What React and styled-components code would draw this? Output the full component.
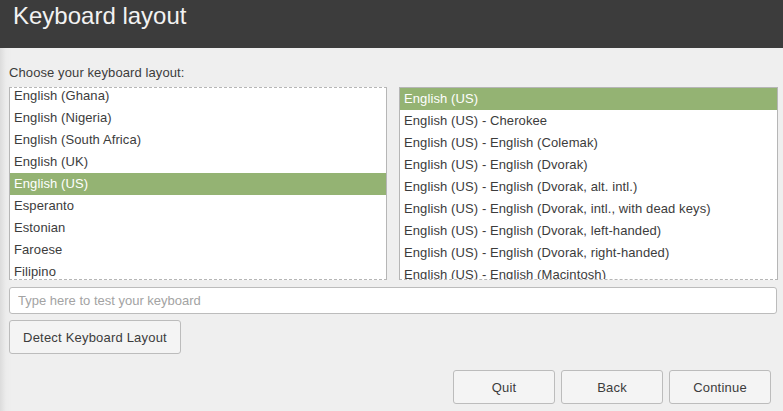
import React, { useState } from "react";
import styled, { createGlobalStyle } from "styled-components";

const layouts = [
  "English (Ghana)",
  "English (Nigeria)",
  "English (South Africa)",
  "English (UK)",
  "English (US)",
  "Esperanto",
  "Estonian",
  "Faroese",
  "Filipino",
];

const variants = [
  "English (US)",
  "English (US) - Cherokee",
  "English (US) - English (Colemak)",
  "English (US) - English (Dvorak)",
  "English (US) - English (Dvorak, alt. intl.)",
  "English (US) - English (Dvorak, intl., with dead keys)",
  "English (US) - English (Dvorak, left-handed)",
  "English (US) - English (Dvorak, right-handed)",
  "English (US) - English (Macintosh)",
];

function App() {
  const [layout, setLayout] = useState("English (US)");
  const [variant, setVariant] = useState("English (US)");

  return (
    <>
      <GlobalStyle />
      <Window>
        <Header>
          <Title>Keyboard layout</Title>
        </Header>
        <Body>
          <Label>Choose your keyboard layout:</Label>
          <Lists>
            <ListBox>
              <ListInner $offset={-3}>
                {layouts.map((name) => (
                  <Row
                    key={name}
                    $selected={name === layout}
                    onClick={() => setLayout(name)}
                  >
                    {name}
                  </Row>
                ))}
              </ListInner>
            </ListBox>
            <ListBox $solidTop>
              <ListInner $offset={0}>
                {variants.map((name) => (
                  <Row
                    key={name}
                    $selected={name === variant}
                    onClick={() => setVariant(name)}
                  >
                    {name}
                  </Row>
                ))}
              </ListInner>
            </ListBox>
          </Lists>
          <TestInput placeholder="Type here to test your keyboard" />
          <DetectRow>
            <Button $width={172}>Detect Keyboard Layout</Button>
          </DetectRow>
          <Footer>
            <Button $width={102}>Quit</Button>
            <Button $width={102}>Back</Button>
            <Button $width={102}>Continue</Button>
          </Footer>
        </Body>
      </Window>
    </>
  );
}

const GlobalStyle = createGlobalStyle`
  html, body {
    margin: 0;
    padding: 0;
    background: #efefef;
  }
  body {
    font-family: "Liberation Sans", "DejaVu Sans", sans-serif;
    font-size: 13px;
    color: #3c3c3c;
  }
`;

const Window = styled.div`
  width: 783px;
  height: 411px;
  display: flex;
  flex-direction: column;
  overflow: hidden;
`;

const Header = styled.div`
  height: 48px;
  background: #3c3c3c;
  display: flex;
  align-items: flex-start;
  padding: 0 13px;
  flex-shrink: 0;
`;

const Title = styled.h1`
  margin: 0;
  padding-top: 2px;
  font-weight: normal;
  font-size: 24px;
  line-height: 28px;
  color: #f2f2f2;
`;

const Body = styled.div`
  flex: 1;
  display: flex;
  flex-direction: column;
  padding: 17px 6px 0 9px;
  background: linear-gradient(to right, #dcdcdc 0px, #ececec 6px, #efefef 12px);
`;

const Label = styled.div`
  font-size: 13px;
  line-height: 16px;
  color: #3c3c3c;
  letter-spacing: 0.1px;
`;

const Lists = styled.div`
  display: grid;
  grid-template-columns: 378px 379px;
  gap: 12px;
  margin-top: 6px;
  height: 193px;
`;

const ListBox = styled.div`
  background: #ffffff;
  border: 1px solid #b6b6b6;
  border-top: 1px ${(p) => (p.$solidTop ? "solid" : "dashed")} #b6b6b6;
  border-bottom: 1px dashed #b6b6b6;
  overflow: hidden;
`;

const ListInner = styled.div`
  margin-top: ${(p) => p.$offset}px;
  display: flex;
  flex-direction: column;
`;

const Row = styled.div`
  height: 22px;
  line-height: 22px;
  padding: 0 4px;
  white-space: nowrap;
  cursor: default;
  letter-spacing: 0.1px;
  background: ${(p) => (p.$selected ? "#94b373" : "transparent")};
  color: ${(p) => (p.$selected ? "#ffffff" : "#3c3c3c")};
`;

const TestInput = styled.input`
  margin-top: 7px;
  height: 27px;
  box-sizing: border-box;
  width: 768px;
  border: 1px solid #bcbcbc;
  border-radius: 3px;
  background: #ffffff;
  padding: 0 8px;
  font-family: inherit;
  font-size: 13px;
  color: #3c3c3c;
  outline: none;
  &::placeholder {
    color: #a3a3a3;
  }
`;

const DetectRow = styled.div`
  display: flex;
  margin-top: 6px;
`;

const Button = styled.button`
  width: ${(p) => p.$width}px;
  height: 34px;
  box-sizing: border-box;
  border: 1px solid #bcbcbc;
  border-radius: 3px;
  background: #f4f4f4;
  font-family: inherit;
  font-size: 13px;
  color: #3c3c3c;
  padding: 0;
  letter-spacing: 0.2px;
`;

const Footer = styled.div`
  display: flex;
  justify-content: flex-end;
  gap: 6px;
  margin-top: 16px;
  padding-right: 6px;
`;

export default App;
